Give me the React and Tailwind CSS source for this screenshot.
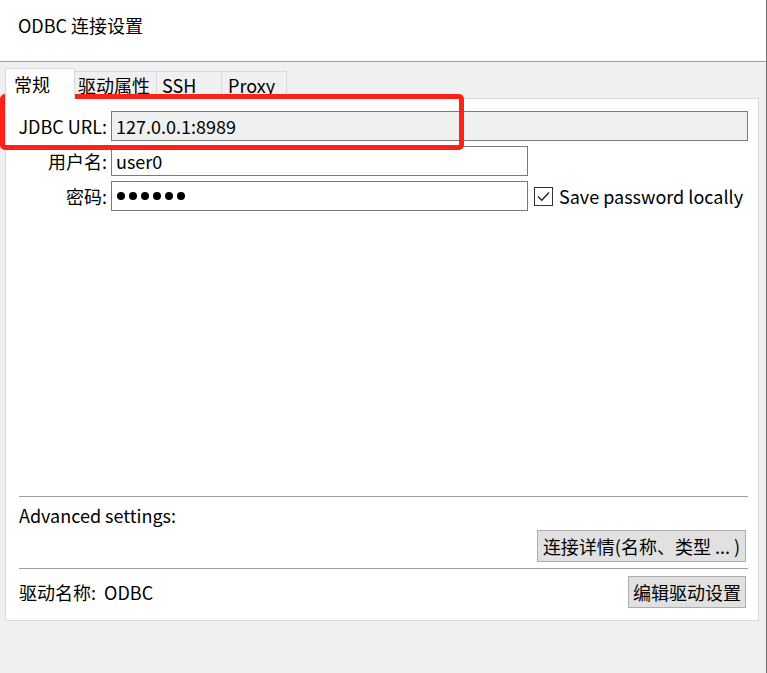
import React from "react";

const font = { fontFamily: '"Noto Sans CJK SC", "Noto Sans", sans-serif' };

const Tab = ({ label, active, w, pl }) => (
    <div
        className={
            active
                ? "relative z-10 -mb-px h-[31px] bg-white border border-b-0 border-[#d9d9d9] leading-[30px]"
                : "h-[27px] bg-[#f0f0f0] border border-b-0 border-l-0 border-[#d9d9d9] leading-[26px]"
        }
        style={{ width: w, paddingLeft: pl }}
    >
        {label}
    </div>
);

const Field = ({ label, value, width, disabled, children }) => (
    <div className="flex items-center">
        <div className="w-[101px] text-right">{label}</div>
        <div
            className={
                "ml-[4px] h-[30px] border border-[#7a7a7a] pl-[4px] leading-[28px] flex items-center " +
                (disabled ? "bg-[#f0f0f0]" : "bg-white")
            }
            style={{ width }}
        >
            {value}
        </div>
        {children}
    </div>
);

const Dots = () => (
    <div className="flex gap-[4px] pl-[1px]">
        {[0, 1, 2, 3, 4, 5].map((i) => (
            <span key={i} className="w-[8px] h-[8px] rounded-full bg-black" />
        ))}
    </div>
);

const App = () => {
    return (
        <div
            className="relative w-[767px] h-[673px] bg-[#f0f0f0] border-r border-[#707070] text-[18px] text-black overflow-hidden"
            style={font}
        >
            {/* title */}
            <div className="h-[62px] bg-white border-b border-[#a0a0a0] pl-[18px] pt-[12px] leading-[26px]">
                {"ODBC 连接设置"}
            </div>

            {/* tabs */}
            <div className="flex items-end h-[36px] pl-[5px]">
                <Tab label="常规" active w={70} pl={8} />
                <Tab label="驱动属性" w={82} pl={3} />
                <Tab label="SSH" w={65} pl={5} />
                <Tab label="Proxy" w={65} pl={6} />
            </div>

            {/* panel */}
            <div className="ml-[5px] w-[754px] h-[523px] bg-white border border-[#d9d9d9] flex flex-col">
                <div className="flex flex-col gap-[5px] pt-[12px]">
                    <Field label="JDBC URL:" value="127.0.0.1:8989" width={637} disabled />
                    <Field label="用户名:" value="user0" width={417} />
                    <Field label="密码:" value={<Dots />} width={417}>
                        <div className="ml-[6px] w-[19px] h-[19px] border border-[#333] bg-white flex items-center justify-center">
                            <svg width="13" height="11" viewBox="0 0 13 11" fill="none">
                                <path d="M1 5.5 L4.8 9.3 L12 1.5" stroke="#222" strokeWidth="1.4" />
                            </svg>
                        </div>
                        <span className="ml-[6px]">{"Save password locally"}</span>
                    </Field>
                </div>

                <div className="mt-auto ml-[13px] w-[729px] pb-[12px]">
                    <div className="h-px bg-[#a0a0a0]" />
                    <div className="mt-[5px] leading-[26px]">{"Advanced settings:"}</div>
                    <div className="mt-[2px] flex justify-end pr-[2px]">
                        <div className="w-[209px] h-[32px] bg-[#e1e1e1] border border-[#adadad] flex items-center justify-center">
                            {"连接详情(名称、类型 ... )"}
                        </div>
                    </div>
                    <div className="mt-[6px] h-px bg-[#a0a0a0]" />
                    <div className="mt-[7px] flex items-center justify-between pr-[2px]">
                        <span className="whitespace-pre">{"驱动名称:  ODBC"}</span>
                        <div className="w-[118px] h-[32px] bg-[#e1e1e1] border border-[#adadad] flex items-center justify-center">
                            {"编辑驱动设置"}
                        </div>
                    </div>
                </div>
            </div>

            {/* red highlight annotation */}
            <div className="absolute left-0 top-[94px] w-[464px] h-[56px] border-[5px] border-[#fe2117] rounded-[5px] pointer-events-none" />
        </div>
    );
};

export default App;
